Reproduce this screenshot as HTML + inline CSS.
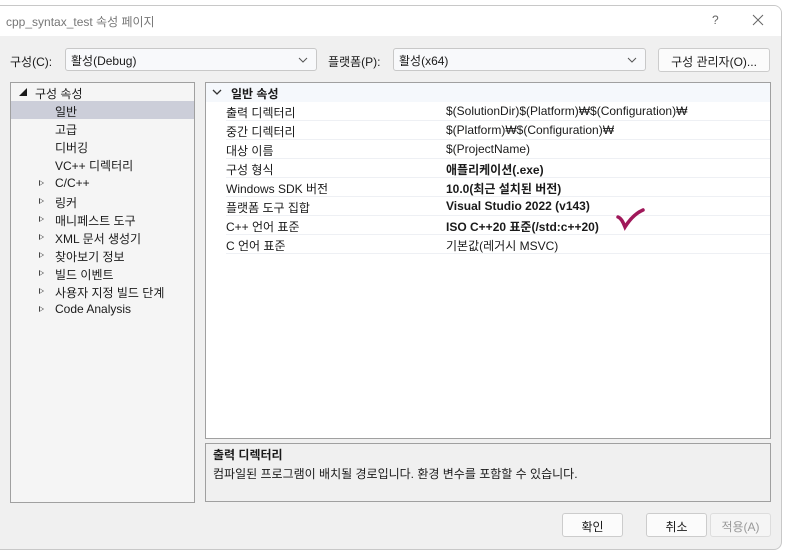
<!DOCTYPE html>
<html><head><meta charset="utf-8"><style>
*{margin:0;padding:0;box-sizing:border-box}
body{width:787px;height:548px;background:#fff;font-family:"Liberation Sans","Noto Sans CJK KR",sans-serif;font-size:12px;color:#1a1a1a;position:relative;overflow:hidden}
.win{position:absolute;left:-1px;top:5px;width:783px;height:545px;border:1px solid #c8c8c8;border-radius:0 8px 8px 0;background:#f0f0f0;overflow:hidden}
.title{position:absolute;left:0;top:0;width:100%;height:30px;background:#fff;color:#777;font-size:12px;padding:7px 0 0 6px}
.abs{position:absolute}
.combo{position:absolute;height:23px;background:#f8f9fb;border:1px solid #c8c8c8;border-radius:3px;padding:3px 0 0 5px}
.combo svg{position:absolute;right:8px;top:8px}
.btn{position:absolute;height:24px;background:#fbfbfb;border:1px solid #ccc;border-radius:3px;text-align:center;padding-top:4px}
.tree{position:absolute;left:10px;top:76px;width:185px;height:421px;background:#f5f5f5;border:1px solid #a0a0a0}
.ti{position:absolute;left:0;width:183px;height:18px;padding-top:2px}
.tri{position:absolute;left:28px;top:6px;width:0;height:0;border-left:5px solid #444;border-top:3.5px solid transparent;border-bottom:3.5px solid transparent}
.tri::after{content:"";position:absolute;left:-4px;top:-2px;border-left:3px solid #f5f5f5;border-top:2px solid transparent;border-bottom:2px solid transparent}
.grid{position:absolute;left:205px;top:76px;width:566px;height:357px;background:#fff;border:1px solid #a0a0a0}
.row{position:absolute;left:20px;width:544px;height:19px;border-bottom:1px solid #eef0f4;padding-top:2px}
.row .v{position:absolute;left:220px;top:2px}
.b{font-weight:bold}
.desc{position:absolute;left:205px;top:437px;width:566px;height:59px;border:1px solid #a0a0a0;background:#f0f0f0;padding:2px 0 0 7px;line-height:19px}
</style></head><body>
<div class="win">
<div class="title">cpp_syntax_test 속성 페이지
<span class="abs" style="left:712px;top:7px;color:#666">?</span>
<svg class="abs" style="left:752px;top:8px" width="12" height="12"><path d="M1 1L11 11M11 1L1 11" stroke="#666" stroke-width="1"/></svg>
</div>
<span class="abs" style="left:10px;top:47px">구성(C):</span>
<div class="combo" style="left:65px;top:42px;width:252px">활성(Debug)<svg width="10" height="6"><path d="M1 1L5 5L9 1" stroke="#555" fill="none"/></svg></div>
<span class="abs" style="left:328px;top:47px">플랫폼(P):</span>
<div class="combo" style="left:393px;top:42px;width:253px">활성(x64)<svg width="10" height="6"><path d="M1 1L5 5L9 1" stroke="#555" fill="none"/></svg></div>
<div class="btn" style="left:658px;top:42px;width:112px">구성 관리자(O)...</div>

<div class="tree">
<div class="ti" style="top:0"><span class="abs" style="left:8px;top:4px;font-size:8px">◢</span><span class="abs" style="left:24px;top:2px">구성 속성</span></div>
<div class="ti" style="top:18px;background:#ccced9"><span class="abs" style="left:44px;top:2px">일반</span></div>
<div class="ti" style="top:36px"><span class="abs" style="left:44px;top:2px">고급</span></div>
<div class="ti" style="top:54px"><span class="abs" style="left:44px;top:2px">디버깅</span></div>
<div class="ti" style="top:72px"><span class="abs" style="left:44px;top:2px">VC++ 디렉터리</span></div>
<div class="ti" style="top:91px"><i class="tri"></i><span class="abs" style="left:44px;top:2px">C/C++</span></div>
<div class="ti" style="top:109px"><i class="tri"></i><span class="abs" style="left:44px;top:2px">링커</span></div>
<div class="ti" style="top:127px"><i class="tri"></i><span class="abs" style="left:44px;top:2px">매니페스트 도구</span></div>
<div class="ti" style="top:145px"><i class="tri"></i><span class="abs" style="left:44px;top:2px">XML 문서 생성기</span></div>
<div class="ti" style="top:163px"><i class="tri"></i><span class="abs" style="left:44px;top:2px">찾아보기 정보</span></div>
<div class="ti" style="top:181px"><i class="tri"></i><span class="abs" style="left:44px;top:2px">빌드 이벤트</span></div>
<div class="ti" style="top:199px"><i class="tri"></i><span class="abs" style="left:44px;top:2px">사용자 지정 빌드 단계</span></div>
<div class="ti" style="top:217px"><i class="tri"></i><span class="abs" style="left:44px;top:2px">Code Analysis</span></div>
</div>

<div class="grid">
<div class="abs" style="left:0;top:0;width:564px;height:19px;background:#f5f8fc"></div>
<svg class="abs" style="left:6px;top:6px" width="10" height="7"><path d="M1 1L5 5L9 1" stroke="#333" stroke-width="1.3" fill="none"/></svg>
<span class="abs b" style="left:25px;top:2px">일반 속성</span>
<div class="row" style="top:19px">출력 디렉터리<span class="v">$(SolutionDir)$(Platform)₩$(Configuration)₩</span></div>
<div class="row" style="top:38px">중간 디렉터리<span class="v">$(Platform)₩$(Configuration)₩</span></div>
<div class="row" style="top:57px">대상 이름<span class="v">$(ProjectName)</span></div>
<div class="row" style="top:76px">구성 형식<span class="v b">애플리케이션(.exe)</span></div>
<div class="row" style="top:95px">Windows SDK 버전<span class="v b">10.0(최근 설치된 버전)</span></div>
<div class="row" style="top:114px">플랫폼 도구 집합<span class="v b">Visual Studio 2022 (v143)</span></div>
<div class="row" style="top:133px">C++ 언어 표준<span class="v b">ISO C++20 표준(/std:c++20)</span></div>
<div class="row" style="top:152px">C 언어 표준<span class="v">기본값(레거시 MSVC)</span></div>
<svg class="abs" style="left:410px;top:124px" width="30" height="24"><path d="M2 10C5 11 7 15 9 20C14 12 20 6 27 3" stroke="#a0185a" stroke-width="3.5" fill="none" stroke-linecap="round"/></svg>
</div>

<div class="desc"><span class="b">출력 디렉터리</span><br>컴파일된 프로그램이 배치될 경로입니다. 환경 변수를 포함할 수 있습니다.</div>

<div class="btn" style="left:562px;top:507px;width:61px">확인</div>
<div class="btn" style="left:646px;top:507px;width:61px">취소</div>
<div class="btn" style="left:710px;top:507px;width:61px;color:#999;background:#f5f5f5;border-color:#ddd">적용(A)</div>
</div>
</body></html>
